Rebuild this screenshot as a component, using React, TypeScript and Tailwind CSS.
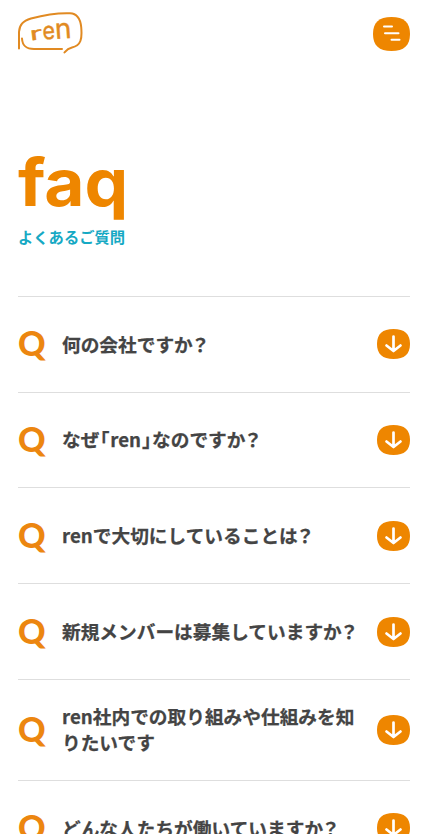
import React from 'react';

const questions = [
  '何の会社ですか？',
  'なぜ「ren」なのですか？',
  'renで大切にしていることは？',
  '新規メンバーは募集していますか？',
  'ren社内での取り組みや仕組みを知りたいです',
  'どんな人たちが働いていますか？',
];

const Logo = () => (
  <svg width="66" height="44" viewBox="0 0 66 44" fill="none" stroke="#e18a22" strokeWidth="2" strokeLinecap="round" strokeLinejoin="round">
    <path d="M1 36.5V20C1.5 12.5 5 9 13 6.5C26 3 42 0.8 52 1.2C59 1.5 62.3 6 63.2 15C64.3 27 63 33.5 54 35.5C49.5 36.5 48.5 38 46.5 40.5" />
    <path d="M4 26.5C4.5 34 8 37 16 37H44" />
    <g fill="#e18a22" strokeWidth="0.4" fontWeight="400" className="font-['Inter',sans-serif]">
      <text x="12.5" y="28.5" fontSize="18" textLength="12.5" lengthAdjust="spacingAndGlyphs" transform="rotate(-7 13 29)">r</text>
      <text x="25" y="27.5" fontSize="24" textLength="12.5" lengthAdjust="spacingAndGlyphs" transform="rotate(-4 25 27)">e</text>
      <text x="37.5" y="27" fontSize="28" textLength="16.5" lengthAdjust="spacingAndGlyphs" transform="rotate(-4 38 27)">n</text>
    </g>
  </svg>
);

const ArrowButton = () => (
  <button aria-label="open" className="h-[30px] w-[33px] shrink-0">
    <svg width="33" height="30" viewBox="0 0 33 30" fill="none">
      <path d="M16.5 0C27.5 0 33 5 33 15S27.5 30 16.5 30S0 25 0 15S5.5 0 16.5 0Z" fill="#ee8600" />
      <path d="M16.5 7.5V21.5M9.5 16.5L16.5 22L23.5 16.5" stroke="#fff" strokeWidth="2.7" strokeLinecap="round" strokeLinejoin="round" />
    </svg>
  </button>
);

// brackets and the question mark are set tighter than the kana around them
const renderText = (text: string) =>
  text.split(/([「」？])/).map((part, i) => {
    if (part === '？') return <span key={i} className="ml-px [font-feature-settings:'palt']">{part}</span>;
    if (part === '「' || part === '」') return <span key={i} className="px-[0.8px]">{part}</span>;
    return part;
  });

const FaqItem = ({ text }: { text: string }) => (
  <li className="flex min-h-[95.8px] items-center border-b border-[#dedede] py-[23.5px]">
    <span className="w-11 shrink-0 pb-0.5 font-['Lato',sans-serif] text-[34px] leading-[34px] font-black text-[#ec8610]">Q</span>
    <p className="w-[300px] pb-px font-['Noto_Sans_CJK_JP',sans-serif] text-[18.7px] leading-[26px] font-bold text-[#444444] [font-feature-settings:'halt'] [-webkit-text-stroke:0.25px_#444444]">
      {renderText(text)}
    </p>
    <div className="ml-auto flex">
      <ArrowButton />
    </div>
  </li>
);

const App = () => {
  return (
    <div className="h-[834px] overflow-hidden bg-white px-[18px]">
      <header className="flex items-start justify-between pt-3">
        <Logo />
        <button aria-label="menu" className="mt-[5px]">
          <svg width="37" height="34" viewBox="0 0 37 34" fill="none">
            <path d="M18.5 0C31 0 37 5.5 37 17S31 34 18.5 34S0 28.5 0 17S6 0 18.5 0Z" fill="#ee8600" />
            <path d="M11 9.5H19M12 16.2H25.5M18.5 22.7H26.5" stroke="#fff" strokeWidth="2" strokeLinecap="round" />
          </svg>
        </button>
      </header>

      <section className="pt-[87px]">
        <h1 className="h-[80px] origin-left scale-x-[1.06] font-['Inter',sans-serif] text-[65.5px] leading-[80px] font-bold text-[#ee8600]">faq</h1>
        <p className="mt-[2px] font-['Noto_Sans_CJK_JP',sans-serif] text-[15.3px] leading-[22px] font-bold text-[#16a9c4]">よくあるご質問</p>
      </section>

      <ul className="mt-[48.8px] border-t border-[#dedede]">
        {questions.map((text) => (
          <FaqItem key={text} text={text} />
        ))}
      </ul>
    </div>
  );
};

export default App;
